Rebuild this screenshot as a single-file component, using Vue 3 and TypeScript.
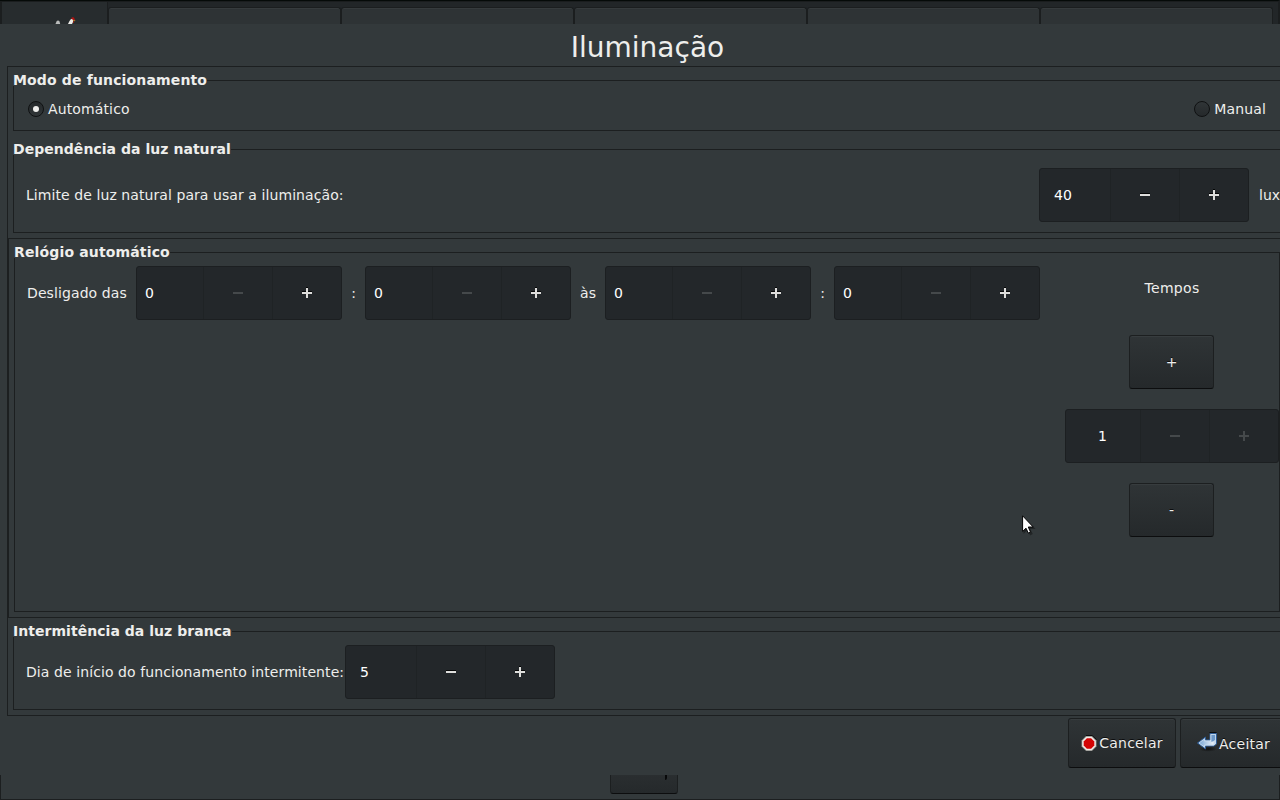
<script setup lang="ts">
import { ref } from 'vue'
import type { FunctionalComponent } from 'vue'
import { h } from 'vue'

interface ClockField {
  id: string
  value: number
  after: string
}

interface SpinProps {
  value: number
  minusOff?: boolean
  plusOff?: boolean
}

const tabs = [1, 2, 3, 4, 5]
const mode = ref<'auto' | 'manual'>('auto')

const clock: ClockField[] = [
  { id: 'offHour', value: 0, after: ':' },
  { id: 'offMinute', value: 0, after: 'às' },
  { id: 'onHour', value: 0, after: ':' },
  { id: 'onMinute', value: 0, after: '' },
]

const glyph = (d: string, off: boolean) =>
  h('svg', { class: 'glyph', width: 10, height: 11, viewBox: '0 -1 10 11' }, [
    off ? null : h('path', { d, fill: '#050606', transform: 'translate(0 -1)' }),
    h('path', { d, fill: off ? '#45494b' : '#dededc' }),
  ])

const Spin: FunctionalComponent<SpinProps> = (props) =>
  h('div', { class: 'spin' }, [
    h('span', { class: 'entry' }, String(props.value)),
    h('span', { class: 'step' }, [glyph('M0 4h10v2H0z', !!props.minusOff)]),
    h('span', { class: 'step' }, [glyph('M0 4h4V0h2v4h4v2H6v4H4V6H0z', !!props.plusOff)]),
  ])
Spin.props = { value: Number, minusOff: Boolean, plusOff: Boolean } as any
</script>

<template>
  <div class="screen">
    <header class="tabbar">
      <div class="tab-active">
        <svg class="hens" width="22" height="8" viewBox="0 0 22 8">
          <path d="M1.500 8 2.500 5.500 4 4.200 5.500 5.500 6.200 8z" fill="#b9bbba" />
          <path d="M14 8 15.500 5 17 3 19.500 3.500 19 6 18 8z" fill="#ecebe8" />
          <path d="M17 2.500 18 1.200 20 1.500 21 4 19 4.500 18.500 3z" fill="#b31310" />
          <path d="M19 4.200h2.600L20 5.500z" fill="#d8951e" />
          <path d="M19 5.500h1v1.500h-1z" fill="#9c1512" />
        </svg>
      </div>
      <div class="tabs">
        <div v-for="t in tabs" :key="t" class="tab"></div>
      </div>
    </header>

    <main class="dialog">
      <h1>Iluminação</h1>
      <div class="panel">
        <fieldset class="group mode">
          <legend>Modo de funcionamento</legend>
          <div class="row spread">
            <label class="radio" @click="mode = 'auto'">
              <i :class="{ on: mode === 'auto' }"></i>Automático
            </label>
            <label class="radio" @click="mode = 'manual'">
              <i :class="{ on: mode === 'manual' }"></i>Manual
            </label>
          </div>
        </fieldset>

        <fieldset class="group light">
          <legend>Dependência da luz natural</legend>
          <div class="row">
            <span class="grow">Limite de luz natural para usar a iluminação:</span>
            <Spin class="wide" :value="40" />
            <span class="unit">lux</span>
          </div>
        </fieldset>

        <div class="clock-box">
          <fieldset class="group clock">
            <legend>Relógio automático</legend>
            <div class="clock-body">
              <div class="times">
                <span class="lead">Desligado das</span>
                <template v-for="f in clock" :key="f.id">
                  <Spin :value="f.value" minus-off />
                  <span v-if="f.after" class="sep" :class="{ word: f.after.length > 1 }">{{ f.after }}</span>
                </template>
              </div>
              <div class="tempos">
                <span class="caption">Tempos</span>
                <button class="btn small">+</button>
                <Spin class="count" :value="1" minus-off plus-off />
                <button class="btn small">-</button>
              </div>
            </div>
          </fieldset>
        </div>

        <fieldset class="group blink">
          <legend>Intermitência da luz branca</legend>
          <div class="row">
            <span class="day">Dia de início do funcionamento intermitente:</span>
            <Spin class="wide" :value="5" />
          </div>
        </fieldset>
      </div>

      <footer class="actions">
        <button class="btn cancel">
          <svg width="16" height="17" viewBox="0 0 16 17">
            <path d="M5 .5h6l4.500 4" fill="none" stroke="#0c0d0d" />
            <path d="M5 1h6l4.500 4.500v6L11 16H5L.5 11.500v-6z" fill="#8f8f89" />
            <path d="M5.300 1.700h5.400l4.100 4.100v5.400l-4.100 4.100H5.300l-4.100-4.100V5.800z" fill="#efece9" />
            <path d="M5.900 3.200h4.200l3.200 3.200v4.200l-3.200 3.200H5.900l-3.200-3.200V6.400z" fill="#d40404" />
          </svg>
          <span>Cancelar</span>
        </button>
        <button class="btn accept">
          <svg width="22" height="20" viewBox="0 0 22 20">
            <defs>
              <linearGradient id="arrow" x1="0" y1="0" x2="1" y2="0">
                <stop offset="0" stop-color="#6d9fd2" />
                <stop offset=".8" stop-color="#e4edf6" />
                <stop offset="1" stop-color="#a8c4e2" />
              </linearGradient>
              <radialGradient id="shade">
                <stop offset="0" stop-color="#000" stop-opacity=".65" />
                <stop offset="1" stop-color="#000" stop-opacity="0" />
              </radialGradient>
            </defs>
            <ellipse cx="12" cy="17" rx="9" ry="2.800" fill="url(#shade)" />
            <path d="M13.500.5h7" stroke="#0c0d0d" />
            <path d="M14 1.500h6.500v10.500l-2.500 2H9.500v3L1.500 11l8-6v3H14z" fill="url(#arrow)" stroke="#2f5c94" />
            <path d="M15 2.500h4.500v5L17 9.500h-2z" fill="#6b98ca" />
            <path d="M15 2.500h4.500v9L17.500 13h-9v2L3 11l5.500-4v2H15z" fill="none" stroke="#c6daee" stroke-width=".8" />
          </svg>
          <span>Aceitar</span>
        </button>
      </footer>

      <svg class="pointer" width="15" height="22" viewBox="0 0 15 22">
        <path d="M1.500 2v17l4-4 2.600 5.400 2.700-1.300L8.300 14h5.400z" fill="#000" opacity=".35" />
        <path d="M.6.8v15.700l3.400-3.300 2.300 4.900 2.200-1L6.300 12h4.900z" fill="#fff" stroke="#050505" />
      </svg>
    </main>

    <div class="under">
      <div class="under-btn"><i></i></div>
    </div>
  </div>
</template>

<style>
body {
  background: #33393b;
}

.spin {
  display: flex;
  box-sizing: border-box;
  flex: none;
  width: 206px;
  height: 54px;
  border: 1px solid #1c1f21;
  border-radius: 3px;
  background: #23272a;
  color: #fff;
}

.spin .entry {
  flex: 1;
  padding-left: 8px;
  line-height: 52px;
}

.spin .step {
  display: flex;
  align-items: center;
  justify-content: center;
  width: 68px;
  border-left: 1px solid #1f2325;
}

.spin .glyph {
  margin-top: -1px;
}

.spin.wide {
  width: 210px;
}

.spin.wide .entry {
  padding-left: 14px;
}

.spin.count {
  width: 214px;
}

.spin.count .entry {
  padding-right: 1px;
  padding-left: 0;
  text-align: center;
}
</style>

<style scoped>
.screen {
  display: flex;
  flex-direction: column;
  width: 1280px;
  height: 800px;
  overflow: hidden;
  background: #33393b;
  color: #eeeeec;
  font: 14px/17px "DejaVu Sans", sans-serif;
}

.tabbar {
  display: flex;
  box-sizing: border-box;
  flex: none;
  height: 24px;
  padding-left: 2px;
  border-top: 1px solid #050a08;
  border-right: 2px solid #1b1e1f;
  background: #222628;
  box-shadow: inset 0 1px #1a1d1e, inset 2px 0 #1b1e1f;
}

.tab-active {
  box-sizing: border-box;
  width: 106px;
  margin-top: 1px;
  padding: 14px 0 0 52px;
  border-right: 1px solid #1b1e1f;
  background: #272c2e;
}

.hens {
  display: block;
}

.tabs {
  display: flex;
  height: 17px;
  margin-top: 6px;
}

.tab {
  box-sizing: border-box;
  width: 233px;
  border: 1px solid #1b1e1f;
  border-bottom: 0;
  border-radius: 3px 3px 0 0;
  background: #2e3335;
  box-shadow: inset 0 1px #363b3d;
}

.dialog {
  position: relative;
  display: flex;
  flex: none;
  flex-direction: column;
  height: 751px;
  overflow: hidden;
}

h1 {
  height: 42px;
  margin: 0;
  padding-left: 15px;
  font-size: 28px;
  font-weight: 400;
  line-height: 48px;
  text-align: center;
}

.panel {
  box-sizing: border-box;
  flex: none;
  width: 1290px;
  height: 650px;
  margin-left: 7px;
  padding-top: 8px;
  border: 1px solid #1c1f20;
}

.group {
  box-sizing: border-box;
  min-width: 0;
  margin: 0 5px;
  padding: 0;
  border: 1px solid #1c1f20;
}

legend {
  height: 11px;
  margin-left: -1px;
  padding: 0;
  background: #33393b;
  font-weight: 700;
  letter-spacing: 0.04px;
  line-height: 11px;
}

.mode legend,
.clock legend {
  letter-spacing: 0.15px;
}

.row {
  display: flex;
  align-items: center;
  padding-left: 12px;
}

.mode {
  height: 56px;
}

.spread {
  justify-content: space-between;
  width: 1252px;
  height: 46px;
  padding-left: 14px;
  box-sizing: border-box;
}

.radio {
  display: flex;
  align-items: center;
  gap: 4px;
  letter-spacing: 0.13px;
}

.radio i {
  display: flex;
  box-sizing: border-box;
  align-items: center;
  justify-content: center;
  width: 16px;
  height: 16px;
  border: 1px solid #0f1112;
  border-radius: 50%;
  background: linear-gradient(#303537, #25292b);
}

.radio i.on {
  background: linear-gradient(#25292b, #303537);
}

.radio i.on::before {
  width: 6px;
  height: 6px;
  border-radius: 50%;
  background: #eeeeec;
  content: "";
}

.light {
  height: 89px;
  margin-top: 13px;
}

.light .row {
  height: 80px;
}

.grow {
  width: 1013px;
  letter-spacing: 0.075px;
}

.unit {
  margin-left: 10px;
}

.clock-box {
  box-sizing: border-box;
  height: 380px;
  margin-top: 5px;
  padding-top: 8px;
  border: 1px solid #1c1f20;
}

.clock {
  width: 1266px;
  height: 365px;
}

.clock-body {
  display: flex;
  align-items: flex-start;
  margin-top: 3px;
}

.times {
  display: flex;
  align-items: center;
  width: 1025px;
  margin-top: 5px;
}

.lead {
  width: 109px;
  margin-left: 12px;
  letter-spacing: 0.1px;
}

.sep {
  width: 23px;
  text-align: center;
}

.sep.word {
  width: 34px;
}

.tempos {
  display: flex;
  flex-direction: column;
  align-items: center;
  gap: 20px;
  width: 214px;
  margin-left: 25px;
}

.caption {
  height: 54px;
  letter-spacing: 0.3px;
  line-height: 54px;
}

.btn {
  display: flex;
  box-sizing: border-box;
  flex: none;
  align-items: center;
  justify-content: center;
  padding: 0;
  border: 1px solid #1c1f20;
  border-bottom-color: #0c0d0e;
  border-radius: 3px;
  background: linear-gradient(#2f3436, #25292b);
  box-shadow: inset 0 1px #373c3e;
  color: #eeeeec;
  font: inherit;
  text-shadow: 0 -1px #0c0d0e;
}

.small {
  width: 85px;
  height: 54px;
  margin-right: 1px;
}

.blink {
  height: 84px;
  margin-top: 8px;
}

.blink .row {
  height: 54px;
  margin-top: 8px;
}

.day {
  width: 319px;
  letter-spacing: 0.085px;
  white-space: nowrap;
}

.actions {
  display: flex;
  gap: 4px;
  margin: 2px 0 0 1068px;
}

.cancel {
  width: 108px;
  height: 50px;
  letter-spacing: 0.2px;
}

.cancel svg {
  margin-right: 2px;
}

.accept {
  justify-content: flex-start;
  width: 112px;
  height: 50px;
  padding-left: 15px;
  letter-spacing: 0.25px;
}

.accept svg {
  margin: -2px 1px 0 0;
}

.accept span {
  padding-top: 2px;
}

.pointer {
  position: absolute;
  top: 491px;
  left: 1022px;
}

.under {
  box-sizing: border-box;
  height: 25px;
  padding-left: 609px;
  border: 1px solid #1c1f20;
  border-top: 0;
}

.under-btn {
  box-sizing: border-box;
  width: 68px;
  height: 19px;
  padding-left: 54px;
  border: 1px solid #1c1f20;
  border-top: 0;
  border-bottom-color: #0c0d0e;
  border-radius: 0 0 3px 3px;
  background: linear-gradient(#2a2e30, #25292b);
}

.under-btn i {
  display: block;
  width: 2px;
  height: 5px;
  border-radius: 0 0 2px;
  background: #08090a;
}
</style>
